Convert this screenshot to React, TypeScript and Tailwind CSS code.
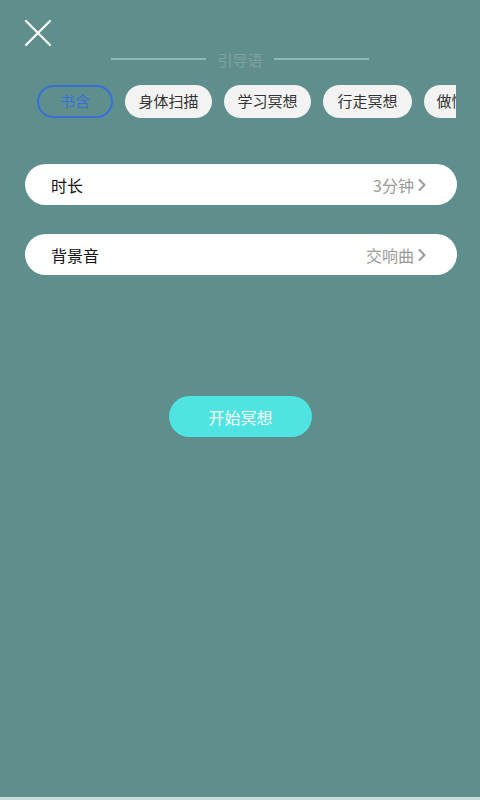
const tags = [
  { label: "书含", active: true, w: "w-[76px]" },
  { label: "身体扫描", active: false, w: "w-[87px]" },
  { label: "学习冥想", active: false, w: "w-[87px]" },
  { label: "行走冥想", active: false, w: "w-[89px]" },
  { label: "做情绪冥想", active: false, w: "w-[100px]" },
];

function Chevron() {
  return (
    <svg width="10" height="14" viewBox="0 0 10 14" className="ml-[3px]">
      <path d="M2.5 2 L7.5 7 L2.5 12" fill="none" stroke="#9a9a9a" strokeWidth="2" strokeLinecap="round" strokeLinejoin="round" />
    </svg>
  );
}

function SettingRow({ title, value }: { title: string; value: string }) {
  return (
    <div className="ml-[25px] mr-[23px] h-[41px] rounded-full bg-white flex items-center justify-between pl-[26px] pr-[30px]">
      <span className="text-[16px] text-[#111]">{title}</span>
      <span className="flex items-center text-[16px] text-[#9a9a9a]">
        {value}
        <Chevron />
      </span>
    </div>
  );
}

export default function App() {
  return (
    <div
      className="h-[800px] w-[480px] flex flex-col bg-[#5f8f8c] overflow-hidden"
      style={{ fontFamily: '"Noto Sans CJK SC", "Noto Sans", sans-serif' }}
    >
      <div className="flex-1 flex flex-col">
        {/* Close */}
        <div className="pt-[20px] pl-[25px] h-[47px]">
          <svg width="26" height="26" viewBox="0 0 26 26">
            <path d="M1 1 L25 25 M25 1 L1 25" stroke="#ffffff" strokeWidth="2.2" strokeLinecap="round" />
          </svg>
        </div>

        {/* Divider */}
        <div className="flex items-center justify-center mt-[2px] h-[20px]">
          <div className="w-[95px] h-[2px] bg-[#8cb7b3]" />
          <span className="mx-[11px] text-[15px] text-[#7fa19e] leading-none">引导语</span>
          <div className="w-[95px] h-[2px] bg-[#8cb7b3]" />
        </div>

        {/* Tags */}
        <div className="mt-[16px] ml-[25px] w-[431px] overflow-hidden">
          <div className="flex gap-[12px] pl-[12px] whitespace-nowrap">
            {tags.map((t) => (
              <div
                key={t.label}
                className={`${t.w} shrink-0 h-[33px] rounded-full flex items-center justify-center text-[15px] ${
                  t.active
                    ? "border-2 border-[#3a6fd8] text-[#3a6fd8]"
                    : "bg-[#f3f3f3] text-[#333]"
                }`}
              >
                {t.label}
              </div>
            ))}
          </div>
        </div>

        {/* Settings */}
        <div className="mt-[46px] flex flex-col gap-[29px]">
          <SettingRow title="时长" value="3分钟" />
          <SettingRow title="背景音" value="交响曲" />
        </div>

        {/* Start */}
        <div className="mt-[121px] flex justify-center">
          <button className="w-[143px] h-[41px] rounded-full bg-[#4fe3e1] text-white text-[16px] ml-[1px]">
            开始冥想
          </button>
        </div>
      </div>
      <div className="h-[3px] bg-[#c6dcdb]" />
    </div>
  );
}
